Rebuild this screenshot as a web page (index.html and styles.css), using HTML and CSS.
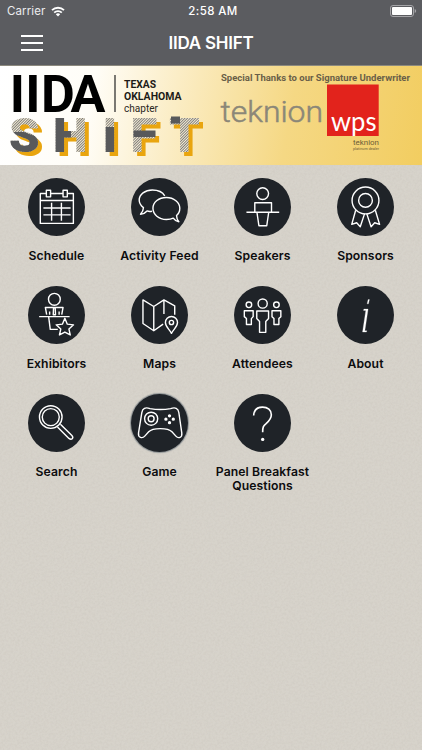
FILE: index.html
```html
<!DOCTYPE html>
<html lang="en">

<head>
    <meta charset="utf-8">
    <meta name="viewport" content="width=device-width, initial-scale=1.0">
    <title>IIDA SHIFT</title>
    <link rel="stylesheet" href="styles.css">
</head>

<body>
    <header>
        <div class="status">
            <div class="carrier">
                <span>Carrier</span>
                <svg class="wifi" viewBox="0 0 14 11">
                    <path d="M1 4.2a8.6 8.6 0 0 1 12 0M3.2 6.6a5.4 5.4 0 0 1 7.6 0" />
                    <path class="solid" d="M4.8 8.2a3.2 3.2 0 0 1 4.4 0L7 10.5z" />
                </svg>
            </div>
            <span class="time">2:58 AM</span>
            <svg class="battery" viewBox="0 0 27 12">
                <rect class="shell" x=".5" y=".5" width="23" height="11" rx="2.5" />
                <rect class="charge" x="2" y="2" width="20" height="8" rx="1" />
                <path class="cap" d="M24.7 4v4q1.5-.5 1.5-2t-1.5-2z" />
            </svg>
        </div>
        <nav>
            <button class="menu-knap" aria-label="Menu"><i></i><i></i><i></i></button>
            <h1>IIDA SHIFT</h1>
        </nav>
    </header>

    <section class="banner">
        <svg viewBox="0 0 422 99">
            <defs>
                <pattern id="hatch" width="1.9" height="1.9" patternUnits="userSpaceOnUse" patternTransform="rotate(-45)">
                    <rect class="hatch-bg" width="1.9" height="1.9" />
                    <rect class="hatch-line" width="1.9" height=".8" />
                </pattern>
                <clipPath id="solid-parts">
                    <path d="M8 66L24 66 40 72V92H8zM54 50H65V65H71V74H65V92H54zM103 61H116V92H103z" />
                </clipPath>
            </defs>
            <text class="iida" y="46" x="9.8 25.2 41 70.5">IIDA</text>
            <path class="divider" d="M115 9V46" />
            <text class="chapter-name" x="124" y="21.5" textLength="32" lengthAdjust="spacingAndGlyphs">TEXAS</text>
            <text class="chapter-name" x="124" y="34" textLength="57.5" lengthAdjust="spacingAndGlyphs">OKLAHOMA</text>
            <text class="chapter" x="124" y="46" textLength="34" lengthAdjust="spacingAndGlyphs">chapter</text>

            <g class="shift">
                <text id="shift" y="86" x="9 53 102.5 130.5 169">SHIFT</text>
            </g>
            <use class="hatched" href="#shift" />
            <use class="grey" href="#shift" clip-path="url(#solid-parts)" />
            <path class="bar" d="M133.5 64.5h22v6.5h-22zM171 50.5h9v7h-9z" />

            <text class="thanks" x="221" y="14.5" textLength="189" lengthAdjust="spacingAndGlyphs">Special Thanks to our Signature Underwriter</text>
            <text class="teknion" x="220.5" y="55.5" textLength="102.5" lengthAdjust="spacingAndGlyphs">teknion</text>
            <rect class="red" x="327" y="18.5" width="51.7" height="51.5" />
            <text class="wps" x="331" y="65" textLength="45.5" lengthAdjust="spacingAndGlyphs">wps</text>
            <text class="dealer" x="353" y="78.5" textLength="26" lengthAdjust="spacingAndGlyphs">teknion</text>
            <text class="dealer tiny" x="353" y="83.5" textLength="26" lengthAdjust="spacingAndGlyphs">platinum dealer</text>
        </svg>
    </section>

    <main class="container">
        <article>
            <svg class="icon" viewBox="0 0 174 174">
                <path d="M56 46H37.500V137H138.500V46H121M69 46H107M37.500 67H138.500M47 90H130M47 111H130M72 74V129M102 74V129" />
                <path d="M56 36H69V56H56zM107 36H120V56H107z" />
            </svg>
            <h2>Schedule</h2>
        </article>
        <article>
            <svg class="icon" viewBox="0 0 174 174">
                <path d="M103 53C97 42 82 35 65 35 43 35 25 48 25 66 25 77 31 84 38 89 38 97 34 103 29 109 38 108 44 105 49 99 54 101 58 101 64 100" />
                <path d="M129 121C123 124 115 125 108 125 85 125 67 110 67 91S85 58 108 58 149 73 149 91C149 101 145 108 139 113 139 121 142 127 146 132 139 131 133 127 129 121z" />
            </svg>
            <h2>Activity Feed</h2>
        </article>
        <article>
            <svg class="icon" viewBox="0 0 174 174">
                <circle cx="87.5" cy="46" r="18" />
                <path d="M63.5 102V74H114.500V102M38 103H138M70 103L76 144H100L106 103" />
            </svg>
            <h2>Speakers</h2>
        </article>
        <article>
            <svg class="icon" viewBox="0 0 174 174">
                <circle cx="87" cy="67" r="41" />
                <circle cx="87" cy="67" r="21" />
                <path d="M57 97L45 140 60 135 71 147 84 108M117 97L130 140 115 135 104 147 91 108" />
            </svg>
            <h2>Sponsors</h2>
        </article>
        <article>
            <svg class="icon" viewBox="0 0 174 174">
                <circle cx="80.5" cy="39" r="18" />
                <path d="M57 86L53 64H107L103 86M66 76V86M95 76V86M34 92H127M63 92L68 131H91" />
                <path d="M78 65H83L84 86H77z" />
                <path class="star" d="M112.5 97L120 115 139 117 125 130 129 148 112.5 139 96 148 100 130 86 117 105 115z" />
            </svg>
            <h2>Exhibitors</h2>
        </article>
        <article>
            <svg class="icon" viewBox="0 0 174 174">
                <path d="M98 115L69.5 135 36.5 113V41L69.5 61 100.5 41 133.5 59V86M69.5 61V135M100.5 41V84" />
                <path d="M123.5 143C117 130 105 123 105 110A18.500 18.500 0 0 1 142 110C142 123 130 130 123.500 143z" />
                <circle cx="123.5" cy="110" r="6.5" />
            </svg>
            <h2>Maps</h2>
        </article>
        <article>
            <svg class="icon" viewBox="0 0 174 174">
                <circle cx="87.5" cy="52" r="14" />
                <circle cx="45.5" cy="56" r="8.5" />
                <circle cx="129.5" cy="56" r="8.5" />
                <path d="M69.5 75H105.500V98L97 107V140H78V107L69.5 98zM31.5 74H58.5V92L53 98V116H38V98L31.5 92zM116 74H143V92L137 98V116H122V98L116 92z" />
            </svg>
            <h2>Attendees</h2>
        </article>
        <article>
            <svg class="icon" viewBox="0 0 174 174">
                <path class="fin" d="M82 69H95L85 135H91L90 139H78L88 73H81zM95 40H99L96 53H92z" />
            </svg>
            <h2>About</h2>
        </article>
        <article>
            <svg class="icon" viewBox="0 0 174 174">
                <circle cx="69.5" cy="69" r="34.5" />
                <circle cx="69.5" cy="69" r="26" />
                <path d="M90 99L125 134Q131 139 135 135 139 131 134 125L99 91" />
            </svg>
            <h2>Search</h2>
        </article>
        <article>
            <svg class="icon game" viewBox="0 0 174 174">
                <path d="M58 43Q89.5 49 121 43C135 38 144 42 146 55L155 117C157 133 144 135 137 127L125 114C113 101 66 101 54 114L42 127C35 135 21 133 23 117L33 55C35 42 44 38 58 43z" />
                <circle cx="61.5" cy="74" r="20" />
                <circle cx="61.5" cy="74" r="9" />
                <path class="dots" d="M117.5 65h.1M117.5 86h.1M106.5 75.5h.1M129 75.5h.1" />
            </svg>
            <h2>Game</h2>
        </article>
        <article>
            <svg class="icon" viewBox="0 0 174 174">
                <path class="question" d="M60 64C61 47 71 38.5 87 38.5 103 38.5 114 48 114 62 114 75 106 82 98 89 90 95 87.5 99 87.5 115" />
                <path class="dots" d="M87.5 137h.1" />
            </svg>
            <h2>Panel Breakfast Questions</h2>
        </article>
    </main>
</body>

</html>
```

FILE: styles.css
```css
body {
    margin: 0;
    min-height: 750px;
    font-family: Inter, Roboto, sans-serif;
    color: #0c0c0e;
    background-color: #d7d3cb;
    background-image: url("data:image/svg+xml,%3Csvg xmlns='http://www.w3.org/2000/svg' width='200' height='200'%3E%3Cfilter id='n'%3E%3CfeTurbulence type='fractalNoise' baseFrequency='.45' numOctaves='3' stitchTiles='stitch'/%3E%3CfeColorMatrix values='0 0 0 0 .4 0 0 0 0 .37 0 0 0 0 .32 .5 0 0 0 -.16'/%3E%3C/filter%3E%3Crect width='200' height='200' filter='url(%23n)' opacity='.45'/%3E%3C/svg%3E");
}

header {
    height: 65px;
    background-color: #5b5c60;
    color: #fff;
    border-bottom: 1px solid #8c897e;
}

.status {
    display: grid;
    grid-template-columns: 1fr auto 1fr;
    align-items: center;
    height: 22px;
    padding: 0 5px 0 7px;
    font-size: 11.5px;
}

.carrier {
    display: flex;
    align-items: center;
    gap: 6px;
    letter-spacing: .1px;
    color: #ececee;
}

.wifi {
    width: 14px;
    height: 11px;
    fill: none;
    stroke: #fff;
    stroke-width: 1.8;
}

.wifi .solid {
    fill: #fff;
    stroke: none;
}

.time {
    padding-left: 2px;
    font-weight: 500;
    letter-spacing: .4px;
}

.battery {
    width: 27px;
    height: 12px;
    justify-self: end;
}

.shell {
    fill: none;
    stroke: #a5a5a8;
}

.charge {
    fill: #fff;
}

.cap {
    fill: #a5a5a8;
}

nav {
    display: grid;
    grid-template-columns: 64px 1fr 64px;
    align-items: center;
    height: 42px;
}

.menu-knap {
    display: flex;
    flex-direction: column;
    gap: 5px;
    width: 22px;
    margin: 0 0 0 21px;
    padding: 0;
    border: none;
    background: none;
}

.menu-knap i {
    height: 2px;
    background-color: #fff;
}

h1 {
    margin: 0;
    font-size: 17px;
    font-weight: 600;
    letter-spacing: -.25px;
    text-align: center;
}

.banner {
    height: 99px;
    background: linear-gradient(100deg, #fff 0%, #fffdf7 22%, #fae9b9 46%, #f5d884 68%, #f2cd60 100%);
}

.banner svg {
    display: block;
    width: 422px;
    height: 99px;
    overflow: visible;
    font-family: Roboto, sans-serif;
}

.iida {
    font-size: 52px;
    font-weight: 700;
}

.divider {
    stroke: #222;
    stroke-width: 1.2;
}

.chapter-name {
    font-size: 11.5px;
    font-weight: 700;
    fill: #1d1b17;
}

.chapter {
    font-size: 10.5px;
    fill: #2a2722;
}

#shift {
    font-size: 49px;
    font-weight: 900;
}

.shift {
    fill: #e9a50f;
    transform: translate(4px, 4px);
}

.hatched {
    fill: url(#hatch);
}

.hatch-bg {
    fill: #f8efd6;
}

.hatch-line {
    fill: #66676a;
}

.grey,
.bar {
    fill: #58595b;
}

.thanks {
    font-size: 9.5px;
    font-weight: 700;
    fill: #6a5f48;
}

.teknion {
    font-size: 30px;
    font-weight: 300;
    fill: #8b8778;
    stroke: #8b8778;
    stroke-width: .5;
}

.red {
    fill: #e2231c;
}

.wps {
    font-family: Lato, sans-serif;
    font-size: 27px;
    fill: #fff;
}

.dealer {
    font-size: 7.5px;
    fill: #6b5c38;
}

.tiny {
    font-size: 4px;
}

.container {
    display: grid;
    grid-template-columns: repeat(4, 103px);
    grid-auto-rows: 108px;
    padding: 13px 5px 0;
}

article {
    display: flex;
    flex-direction: column;
    align-items: center;
}

.icon {
    flex: none;
    width: 57px;
    height: 58px;
    border-radius: 50%;
    background-color: #1f2328;
    fill: none;
    stroke: #fff;
    stroke-width: 4.3;
    stroke-linejoin: round;
}

.game {
    box-shadow: 0 0 1px 1px #8d9294;
}

.star {
    fill: #1f2328;
}

.fin {
    fill: #fff;
    stroke-width: .8;
}

.question {
    stroke-width: 5;
}

.dots {
    stroke-width: 10;
    stroke-linecap: round;
}

h2 {
    margin: 13px 0 0;
    max-width: 100px;
    font-size: 12.2px;
    font-weight: 600;
    line-height: 14px;
    letter-spacing: .08px;
    text-align: center;
}
```
